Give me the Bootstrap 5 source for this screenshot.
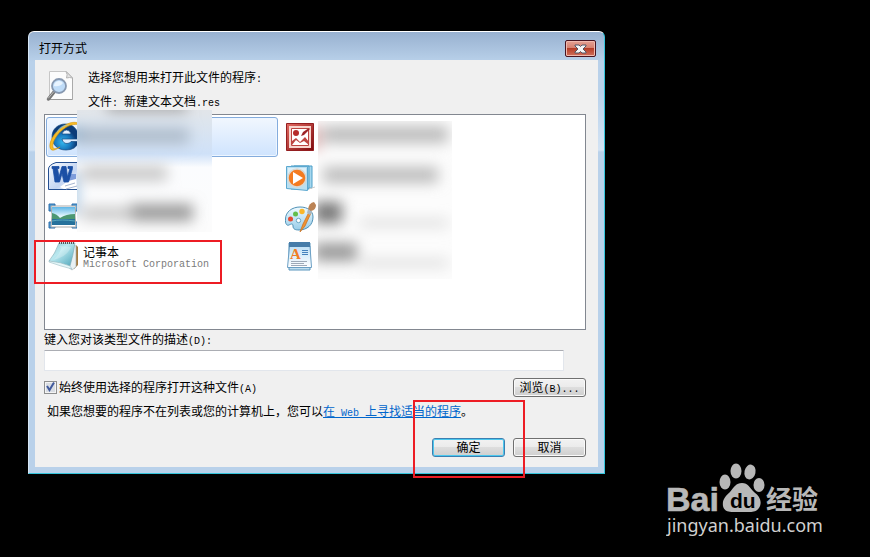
<!DOCTYPE html>
<html lang="zh-CN">
<head>
<meta charset="utf-8">
<meta name="viewport" content="width=device-width, initial-scale=1">
<title>打开方式</title>
<link href="https://cdn.jsdelivr.net/npm/bootstrap@5.3.0/dist/css/bootstrap.min.css" rel="stylesheet">
<style>
  body { background: #000; color: #000; font: 12px/20px "Noto Sans CJK SC", sans-serif; }
  .desktop { padding: 31px 48px 19px 28px; }
  .window { max-width: 577px; border-radius: 6px 6px 0 0; padding: 0 6px 6px; border: 1px solid #35c5dc; border-top-color: #fff; border-left-color: #d7e6f5;
    background: linear-gradient(#98b1d0, #b9d1ea 30px, #b9d1ea 60px, #d3e3f4 118px, #b9d1ea 120px); }
  .titlebar { height: 28px; padding: 6px 2px 0 4px; }
  .titlebar h1 { font-size: 12px; line-height: 20px; }
  .btn-shut { width: 31px; height: 17px; margin-top: 2px; border: 1px solid #471420; border-radius: 2px; box-shadow: inset 0 0 0 1px #f0b9ae;
    background: linear-gradient(#e5a193, #d5806f 47%, #b53d27 50%, #d0705c); }
  .client { background: #f0f0f0; padding: 5px 12px 10px 9px; }
  .intro { line-height: 24px; padding-bottom: 1px; }
  .intro svg { margin: 4px 12px 0 0; }
  .lt { font: 10px/12px "Liberation Mono", monospace; }
  .programs { border: 1px solid #828790; background: #fff; height: 216px; padding: 2px 0 0; }
  .programs .left-col { flex: 0 0 44%; padding: 0 5px 0 1px; }
  .program { height: 40px; padding: 1px 1px; border: 1px solid transparent; background: none; border-radius: 3px; text-align: left; color: #000; margin: 0; }
  .program.chosen { border-color: #84acdd; background: linear-gradient(#f1f7fe, #cfe4fe); box-shadow: inset 0 0 0 1px #eef6ff; }
  .program .names { margin-left: 3px; padding-top: 1px; line-height: 13px; }
  .program .lt { color: #7b7b7b; line-height: 13px; }
  .smudge { position: absolute; overflow: hidden; }
  .smudge svg { display: block; }
  .smudge-left { left: 32px; top: -5px; }
  .smudge-right { left: 273px; top: 6px; }
  .callout { position: absolute; border: 2px solid #ed1c24; pointer-events: none; }
  .callout-item { inset: 3px 0 -7px -12px; }
  .callout-item-wrap { width: 176px; height: 40px; }
  .callout-ok { inset: -38px -20px -21px -19px; }
  .desc-label { line-height: 18px; margin-bottom: 2px; }
  .desc { height: 21px; width: 96%; border: 1px solid #e2e6ec; border-top-color: #abadb3; border-radius: 1px; background: #fff; padding: 0 4px; }
  .always { margin-top: 7px; line-height: 17px; }
  .tick { appearance: none; width: 13px; height: 13px; border: 1px solid #8e8f8f; margin: 0 2px 0 0; box-shadow: inset 0 0 0 1px #f4f4f4; background: #d9dde3; }
  .tick-mark { position: absolute; left: 0; top: 2px; display: none; pointer-events: none; }
  .tick:checked + .tick-mark { display: block; }
  .btn-win { width: 73px; height: 19px; padding: 0 0 1px; border: 1px solid #707070; border-radius: 3px; font-size: 12px; line-height: 16px; color: #000; box-shadow: inset 0 0 0 1px #fafafa;
    background: linear-gradient(#f2f2f2, #ebebeb 48%, #dddddd 50%, #cfcfcf); }
  .btn-win.primary { border-color: #3c7fb1; box-shadow: inset 0 0 0 1px #4cc8ee; }
  .hint { margin: 4px 0 17px 3px; }
  .hint a { color: #0066cc; }
  .watermark { width: 156px; }
</style>
<script src="https://cdn.jsdelivr.net/npm/bootstrap@5.3.0/dist/js/bootstrap.bundle.min.js"></script>
</head>
<body>
<div class="desktop d-flex justify-content-between align-items-start min-vh-100">
  <main class="window flex-grow-1">
    <header class="titlebar d-flex justify-content-between align-items-start">
      <h1 class="m-0 fw-normal">打开方式</h1>
      <button class="btn-shut d-flex align-items-center justify-content-center p-0" type="button" aria-label="关闭">
        <svg width="13" height="10" viewBox="0 0 13 10"><path d="M1 1h4l1.500 1.500L8 1h4v1L9 5l3 3v1H8L6.500 7.500 5 9H1V8l3-3-3-3z" fill="#f5f5f5" stroke="#535666"/></svg>
      </button>
    </header>
    <form class="client">
      <div class="intro d-flex align-items-start">
        <svg width="32" height="36" viewBox="0 0 32 36">
          <path d="M5.500 2.500h17l6 6v22h-23z" fill="#fcfcfc" stroke="#c6c6c6"/><path d="M28.500 30.500h-23" stroke="#999"/><path d="M28.500 9v21.500" stroke="#aaa"/>
          <path d="M22 2.500q2 3 .500 6.500 3-1 6 0z" fill="#e3e3e3" stroke="#b5b5b5"/>
          <path d="M10 23 4.500 30" stroke="#777" stroke-width="3.500" stroke-linecap="round"/><path d="M9.500 23 4.500 29" stroke="#bbb" stroke-linecap="round"/>
          <circle cx="15" cy="17" r="7" fill="#bfdcf8" stroke="#8798b0" stroke-width="1.800"/><path d="M10 17a5 5 0 0 1 9-3q-3 4-9 3z" fill="#e8f4ff"/>
        </svg>
        <div>
          <div>选择您想用来打开此文件的程序<span class="lt">:</span></div>
          <div>文件<span class="lt">:&nbsp;</span>新建文本文档<span class="lt">.res</span></div>
        </div>
      </div>
      <div class="programs d-flex position-relative">
        <div class="left-col">
          <button type="button" class="program chosen d-flex align-items-center w-100" aria-label="Internet Explorer">
            <svg width="32" height="32" viewBox="0 0 32 32">
              <defs><radialGradient id="ie" cx=".4" cy=".7"><stop offset="0" stop-color="#35b7ee"/><stop offset=".6" stop-color="#1877bd"/><stop offset="1" stop-color="#0c3c78"/></radialGradient></defs>
              <path d="M31 18H14q1 4.500 5 4.500 3 0 4-2h8q-3 8.500-13 8.500C9 29 4 23 4 16 4 8 10 3 17.500 3S31 9 31 18zM14 13h9q-1-4-4.500-4T14 13z" fill="url(#ie)" stroke="#134a83" stroke-width=".7"/>
              <path d="M30 2C20-2 4 12 2 23c-1 7 3 8 10 3-6 3-8 2-7-3C7 14 19 2 30 3.500z" fill="#f9bc23" stroke="#d4920c" stroke-width=".6"/>
              <path d="M8 13q5-8 14-9-4-1-8 1t-6 8z" fill="#8ccdf2" opacity=".6"/>
            </svg>
          </button>
          <button type="button" class="program d-flex align-items-center w-100" aria-label="Microsoft Word">
            <svg width="32" height="32" viewBox="0 0 32 32">
              <defs><linearGradient id="wd" x2="1" y2="1"><stop offset="0" stop-color="#f9fcff"/><stop offset=".6" stop-color="#c4d5f2"/><stop offset="1" stop-color="#fff"/></linearGradient></defs>
              <path d="M8 1.500h21.500v27H.500V8q0-4 7.500-6.500z" fill="url(#wd)" stroke="#244f91"/>
              <path d="M22 13h6v14H17z" fill="#7f9ddb"/><path d="m12 26 8-6 8-2v10H16z" fill="#fff"/><path d="m17 25 10-3m-9 6 11-3" stroke="#a7b6d1"/>
              <path d="M4 5.500h7v2H9.500l1.500 8.500 3-10.500h4l1.500 10.500L22 7.500h-2v-2h4.500v2L20.500 21h-4.500L14 12.500 11.500 21H7L5 7.500H4z" fill="#1b4fa5" stroke="#1b4fa5" stroke-width=".8"/>
            </svg>
          </button>
          <button type="button" class="program d-flex align-items-center w-100" aria-label="Windows 照片查看器">
            <svg width="32" height="32" viewBox="0 0 32 32">
              <defs><linearGradient id="sky" x2="0" y2="1"><stop offset="0" stop-color="#5fb6e7"/><stop offset=".5" stop-color="#e1f6fd"/><stop offset="1" stop-color="#fff"/></linearGradient></defs>
              <path d="M1 3h6v7H1zM24 3h6v7h-6zM1 21h6v6H1zM24 21h6v6h-6z" fill="#4b9ad4" stroke="#2f6fab"/>
              <path d="M3 5h25l-1 9 1 12H3l1-12z" fill="#fff" stroke="#aaa"/><path d="M4 6h23v18H4z" fill="url(#sky)"/>
              <path d="M4 12q5 1 8 5 6-4 15-4v6H4z" fill="#4c9872"/><path d="M4 18h23v6H4z" fill="#26719b"/><path d="M4 20q9-2 23 0" stroke="#59a8bf" fill="none"/>
            </svg>
          </button>
          <div class="position-relative">
            <button type="button" class="program d-flex align-items-center w-100">
              <svg width="32" height="32" viewBox="0 0 32 32">
                <defs><linearGradient id="np" x2="1" y2="1"><stop offset="0" stop-color="#8fc5d1"/><stop offset=".4" stop-color="#b9e8ef"/><stop offset="1" stop-color="#4ba3b8"/></linearGradient></defs>
                <path d="m28 4 2 2v18l-4 4z" fill="#a67b3e"/><path d="m26 4 2 1v21l-4 3-4-3z" fill="#e9f1f3" stroke="#9ba9ab" stroke-width=".6"/>
                <path d="M11 2h16q-2 13-5 23L1 20q6-7 10-18z" fill="url(#np)" stroke="#7eaab4" stroke-width=".6"/>
                <path d="M1 20q12 1 21 5l2 3Q12 25 1 21z" fill="#e4f6f8" stroke="#8cb0b8" stroke-width=".5"/><path d="M11 2h16" stroke="#555" stroke-width="2" stroke-dasharray="1 1"/><path d="M12 5q3 5-7 14 14-3 18-13z" fill="#fff" opacity=".25"/>
              </svg>
              <span class="names d-flex flex-column"><span>记事本</span><span class="lt">Microsoft Corporation</span></span>
            </button>
            <div class="callout-item-wrap position-absolute top-0 start-0"><span class="callout callout-item"></span></div>
          </div>
        </div>
        <div class="flex-grow-1">
          <button type="button" class="program d-flex align-items-center w-100" aria-label="Microsoft Office Picture Manager">
            <svg width="32" height="32" viewBox="0 0 32 32">
              <defs><linearGradient id="pm" x2="1" y2="1"><stop offset="0" stop-color="#e36a61"/><stop offset="1" stop-color="#7d080b"/></linearGradient></defs>
              <path d="M1.500 2.500h27v27h-27z" fill="url(#pm)" stroke="#941e20"/><path d="M4 5h22v22H4z" fill="#f8d5ce"/><path d="M6.500 7.500h17v17h-17z" fill="#fff" stroke="#bd4541"/>
              <circle cx="11" cy="12" r="3" fill="#b62c2b"/><path d="M7 24v-4l4-3 4 4 5-5 4 5v3l-5-4-4 2-4-3z" fill="#bd4440"/><path d="m16 15 2-4 6-4 1 1-6 6z" fill="#9d2528"/>
            </svg>
          </button>
          <button type="button" class="program d-flex align-items-center w-100" aria-label="Windows Media Player">
            <svg width="32" height="32" viewBox="0 0 32 32">
              <path d="M9 5h18v22l-18 1zM6 5h18v23H6z" fill="#a6d7ee" stroke="#4c9fc9"/><path d="M1.500 5.500h21v24l-21-2z" fill="#b9dff1" stroke="#5ba8d0"/><path d="M3 7h18v8L3 20z" fill="#dcf0fa"/>
              <circle cx="12" cy="17" r="9" fill="#f47b20" stroke="#d9d7d2" stroke-width="1.500"/><path d="m8 11 10 6-10 6z" fill="#fff"/><path d="m24 28 6-2" stroke="#ccc"/>
            </svg>
          </button>
          <button type="button" class="program d-flex align-items-center w-100" aria-label="画图">
            <svg width="32" height="32" viewBox="0 0 32 32">
              <defs><linearGradient id="pal" x2="0" y2="1"><stop offset="0" stop-color="#eefaff"/><stop offset="1" stop-color="#99cde9"/></linearGradient></defs>
              <path d="M.500 18C.500 11 7 6 15 6s13 4 13 10c0 8-6 13-14 13-4 0-6-1-6-4s-2-2-4-1-4-1-3.500-6z" fill="url(#pal)" stroke="#4f91b6"/>
              <circle cx="13.500" cy="19.500" r="2.200" fill="#fff" stroke="#67a5c4"/><circle cx="5.500" cy="18" r="2.500" fill="#e64a32"/><circle cx="10.500" cy="13" r="2.500" fill="#62bd4b"/><circle cx="17" cy="10.500" r="2.700" fill="#fab629"/>
              <path d="m15 31 3-8 6-12 2 1-6 13z" fill="#f09332" stroke="#c96d19" stroke-width=".7"/><path d="m23 8 4 3-2 3-3-2z" fill="#aab6be"/><path d="M23 8q1-6 6-7l2 3q0 5-5 6z" fill="#bb8355"/>
            </svg>
          </button>
          <button type="button" class="program d-flex align-items-center w-100" aria-label="写字板">
            <svg width="32" height="32" viewBox="0 0 32 32">
              <defs><linearGradient id="wp" x2="0" y2="1"><stop offset="0" stop-color="#bfe0f6"/><stop offset="1" stop-color="#fff"/></linearGradient></defs>
              <path d="M4 2h21v27H4z" fill="#c1dff0" stroke="#5a96bd"/><path d="M4.500 5h20.500l1.500 21.500h-24z" fill="url(#wp)" stroke="#6a9fc4"/><path d="M4 1h21v5H4z" fill="#467ca9"/>
              <text x="5" y="18" font-family="Liberation Serif, serif" font-weight="bold" font-size="15" fill="#f17e23">A</text>
              <path d="M17 9.500h6m-6 2h6m-6 2h6" stroke="#4782bd"/><path d="M6 20.500h16m-16 2h13m-13 2h16" stroke="#9da9b7"/>
            </svg>
          </button>
        </div>
        <div class="smudge smudge-left" aria-hidden="true">
          <svg width="135" height="122" viewBox="0 0 135 122">
            <defs>
              <linearGradient id="haze" x2="0" y2="1"><stop offset="0" stop-color="#e2e5e9"/><stop offset=".1" stop-color="#dde5ee"/><stop offset=".36" stop-color="#cfe1f8"/><stop offset=".47" stop-color="#fbfcfe"/><stop offset="1" stop-color="#fcfcfc"/></linearGradient>
              <filter id="soft" filterUnits="userSpaceOnUse" x="-40" y="-40" width="220" height="240"><feGaussianBlur stdDeviation="7"/></filter>
            </defs>
            <path d="M0 0h135v122H0z" fill="url(#haze)"/>
            <g filter="url(#soft)"><path d="M0 18h112v16H0z" fill="#aebccb"/><path d="M-4 18h6v12h-6z" fill="#438ab4"/><path d="M5 56h85v15H5z" fill="#c8c8c8"/><path d="M52 94h64v17H52z" fill="#9a9a9a"/><path d="M5 97h50v13H5z" fill="#c8c8c8"/><path d="M-6 62h6v42h-6z" fill="#76a9d2"/><path d="M30 0h80v-6H30z" fill="#777"/></g>
          </svg>
        </div>
        <div class="smudge smudge-right" aria-hidden="true">
          <svg width="134" height="158" viewBox="0 0 134 158">
            <path d="M0 0h134v158H0z" fill="#fcfcfc"/>
            <g filter="url(#soft)"><path d="M5 5h125v17H5z" fill="#bcbcbc"/><path d="M5 46h115v16H5z" fill="#bcbcbc"/><path d="M-4 5h5v24h-5z" fill="#c66"/><path d="M-4 81h28v21H-4z" fill="#777"/><path d="M-4 122h43v18H-4z" fill="#999"/><path d="M42 98h88v8H42zM42 138h88v8H42z" fill="#ddd"/></g>
          </svg>
        </div>
      </div>
      <label class="desc-label d-block" for="desc">键入您对该类型文件的描述<span class="lt">(D):</span></label>
      <input class="desc d-block" id="desc" type="text">
      <div class="always d-flex justify-content-between align-items-start">
        <div class="d-flex align-items-center position-relative">
          <input class="tick" id="always" type="checkbox" checked>
          <svg class="tick-mark" width="13" height="13" viewBox="0 0 13 13"><path d="m3 6 2.500 4L10 2.500" fill="none" stroke="#415a9d" stroke-width="2"/></svg>
          <label for="always">始终使用选择的程序打开这种文件<span class="lt">(A)</span></label>
        </div>
        <button type="button" class="btn-win">浏览<span class="lt">(B)...</span></button>
      </div>
      <p class="hint">如果您想要的程序不在列表或您的计算机上，您可以<a href="#">在<span class="lt"> Web </span>上寻找适当的程序</a>。</p>
      <div class="d-flex justify-content-end gap-2">
        <div class="position-relative d-flex"><button type="submit" class="btn-win primary">确定</button><span class="callout callout-ok"></span></div>
        <button type="button" class="btn-win">取消</button>
      </div>
    </form>
  </main>
  <svg class="watermark align-self-end flex-shrink-0" viewBox="0 0 156 76" fill="#b8b8b8" role="img" aria-label="Baidu 经验">
    <text x="0" y="49" font-family="Liberation Sans, sans-serif" font-weight="bold" font-size="34" stroke="#b8b8b8" stroke-width=".6">Bai</text>
    <ellipse cx="59" cy="20" rx="5.500" ry="7.500"/><ellipse cx="70" cy="9" rx="5.500" ry="7.500"/><ellipse cx="84" cy="10" rx="5.500" ry="7.500" transform="rotate(12 84 10)"/><ellipse cx="93" cy="23" rx="5.500" ry="7"/>
    <path d="M76 21c6 0 8 5 12 9 5 4 8 8 6 14-2 5-6 6-10 6H67c-5 0-9-1-10-6-1-7 3-10 7-14 4-5 6-9 12-9z"/>
    <text x="64" y="46" font-family="Liberation Sans, sans-serif" font-weight="bold" font-size="21" fill="#000">du</text>
    <text x="100" y="47" font-family="Noto Sans CJK SC, sans-serif" font-weight="bold" font-size="26">经验</text>
    <text x="1" y="70" font-family="Noto Sans, sans-serif" font-size="18" fill="#d0d0d0">jingyan.baidu.com</text>
  </svg>
</div>
</body>
</html>
